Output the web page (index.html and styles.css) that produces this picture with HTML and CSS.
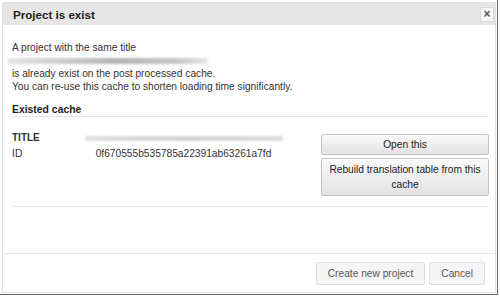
FILE: index.html
```html
<!DOCTYPE html>
<html lang="en">
<head>
  <meta charset="UTF-8">
  <title>Project is exist</title>
  <link rel="stylesheet" href="styles.css">
</head>
<body>
<div class="frame">
  <div class="dialog">
    <div class="dialog-header">
      <span class="dialog-title">Project is exist</span>
      <span class="close-btn">&times;</span>
    </div>
    <div class="dialog-body">
      <p class="message">
        A project with the same title<br>
        <span class="blurred blurred-title"></span><br>
        is already exist on the post processed cache.<br>
        You can re-use this cache to shorten loading time significantly.
      </p>
      <h3 class="section-title">Existed cache</h3>
      <div class="cache-row">
        <table class="cache-info">
          <tr>
            <th>TITLE</th>
            <td><span class="blurred blurred-cache"></span></td>
          </tr>
          <tr>
            <th class="light">ID</th>
            <td>0f670555b535785a22391ab63261a7fd</td>
          </tr>
        </table>
        <div class="cache-actions">
          <button class="btn">Open this</button>
          <button class="btn btn-tall">Rebuild translation table from this cache</button>
        </div>
      </div>
    </div>
    <div class="dialog-footer">
      <button class="btn-flat">Create new project</button>
      <button class="btn-flat">Cancel</button>
    </div>
  </div>
</div>
</body>
</html>
```

FILE: styles.css
```css
html, body {
  margin: 0;
  padding: 0;
  background: #fff;
  font-family: "Liberation Sans", Arial, sans-serif;
  font-size: 10.2px;
  color: #333;
}
.frame {
  width: 498px;
  height: 295px;
  box-sizing: border-box;
  padding: 2px 1px 1px 2px;
  border-right: 1px solid #666;
  border-bottom: 1px solid #666;
}
.dialog {
  height: 100%;
  box-sizing: border-box;
  border: 1px solid #e2e2e2;
  display: flex;
  flex-direction: column;
}
.dialog-header {
  height: 22px;
  background: #e6e6e6;
  display: flex;
  align-items: center;
  justify-content: space-between;
  padding: 0 1px 0 10px;
}
.dialog-title {
  font-size: 11.6px;
  font-weight: bold;
  color: #222;
}
.close-btn {
  width: 12px;
  height: 13px;
  border: 1px solid #d8d8d8;
  background: #f8f8f8;
  color: #555;
  font-size: 12px;
  font-weight: bold;
  line-height: 12px;
  text-align: center;
  margin-top: 1px;
}
.dialog-body {
  flex: 1;
  padding: 16px 6px 0 9px;
}
.message {
  margin: 0;
  line-height: 13px;
}
.blurred {
  display: inline-block;
  vertical-align: middle;
  filter: blur(1.2px);
}
.blurred-title {
  width: 200px;
  height: 6px;
  margin-left: -4px;
  background: linear-gradient(to right, #e4e4e4, #b4b4b4 55%, #c8c8c8 85%, #e8e8e8);
}
.blurred-cache {
  width: 198px;
  height: 5px;
  background: linear-gradient(to right, #e0e0e0, #d4d4d4 50%, #dedede);
}
.section-title {
  margin: 10px 0 0;
  font-size: 10.4px;
  font-weight: bold;
  line-height: 13px;
  color: #222;
  border-bottom: 1px solid #e5e5e5;
}
.cache-row {
  display: flex;
  align-items: flex-start;
  justify-content: space-between;
  padding-top: 13px;
  padding-bottom: 10px;
  border-bottom: 1px solid #e5e5e5;
}
.cache-info {
  border-collapse: collapse;
}
.cache-info th,
.cache-info td {
  padding: 0;
  line-height: 16px;
  height: 16px;
}
.cache-info th {
  width: 72px;
  text-align: left;
  font-size: 10px;
  font-weight: bold;
  color: #333;
}
.cache-info th.light {
  font-size: 10.4px;
  font-weight: normal;
}
.cache-info td {
  width: 199px;
  text-align: center;
}
.cache-actions {
  width: 168px;
  margin-top: 4px;
  display: flex;
  flex-direction: column;
  gap: 3px;
}
.btn {
  font-family: inherit;
  font-size: 10.2px;
  color: #222;
  line-height: 15px;
  padding: 2px 4px;
  margin: 0;
  border: 1px solid #c4c4c4;
  border-radius: 2px;
  background: linear-gradient(#fafafa, #e2e2e2);
}
.btn-tall {
  padding: 3px 4px;
}
.dialog-footer {
  border-top: 1px solid #e5e5e5;
  padding: 8px 10px 7px;
  display: flex;
  justify-content: flex-end;
  gap: 4px;
}
.btn-flat {
  font-family: inherit;
  font-size: 10.2px;
  color: #555;
  height: 23px;
  padding: 0 11px;
  margin: 0;
  border: 1px solid #dcdcdc;
  border-radius: 2px;
  background: #f5f5f5;
}
```
